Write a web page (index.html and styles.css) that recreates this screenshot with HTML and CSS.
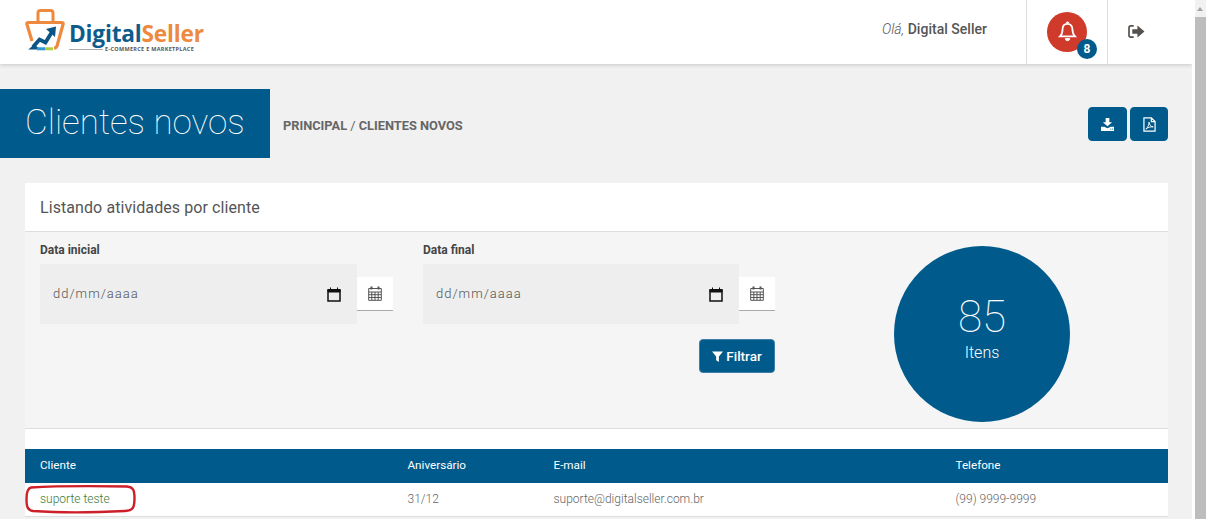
FILE: index.html
```html
<!DOCTYPE html>
<html lang="pt-BR">
<head>
<meta charset="utf-8">
<title>Clientes novos</title>
<link rel="stylesheet" href="styles.css">
</head>
<body>
<div class="app">
  <header class="topbar">
    <a class="logo">
      <svg class="logo-mark" viewBox="0 0 40 42" width="40" height="42" aria-hidden="true">
        <path d="M13 12V4Q13 1.500 15.500 1.500H25.500Q28 1.500 28 4V12" fill="none" stroke="#ee8a3e" stroke-width="3"/>
        <path d="M7 32 2 15.500Q1.300 13.500 3.500 13.500H36.500Q38.700 13.500 38 15.500L32 37Q31.300 39 29 39" fill="none" stroke="#ee8a3e" stroke-width="3.200" stroke-linejoin="round"/>
        <path d="M8 38 14.500 30.500 20.500 33.500 27.500 22" fill="none" stroke="#0b5585" stroke-width="3.800"/>
        <path d="M21 20 31 17.500 30 28Z" fill="#0b5585"/>
        <path d="M6 39.500 9 37 13 39.500 Z" fill="#0b5585" stroke="#0b5585" stroke-width="2"/>
        <path d="M12 39.800H20" stroke="#2f9ad6" stroke-width="3"/>
        <path d="M20 39.800H28" stroke="#b5cc3c" stroke-width="3"/>
      </svg>
      <span class="logo-text">
        <span class="logo-name"><span class="logo-blue">Digital</span><span class="logo-orange">Seller</span></span>
        <span class="logo-sub"><i class="logo-rule"></i>E-COMMERCE E MARKETPLACE</span>
      </span>
    </a>
    <div class="greeting"><em>Olá,</em> <strong>Digital Seller</strong></div>
    <div class="top-cell top-bell">
      <span class="bell">
        <svg viewBox="0 0 24 24" width="21" height="23" aria-hidden="true"><path d="M12 3.200c-3.500 0-5.600 2.600-5.600 6 0 5-1.200 6.600-3 8.300h17.200c-1.800-1.700-3-3.300-3-8.300 0-3.400-2.100-6-5.600-6Z" fill="none" stroke="#fff" stroke-width="2"/><path d="M10.500 2.500a1.500 1.500 0 0 1 3 0M9.500 20a2.500 2.500 0 0 0 5 0Z" fill="#fff" stroke="#fff"/></svg>
        <b class="badge">8</b>
      </span>
    </div>
    <div class="top-cell top-exit">
      <svg viewBox="0 0 20 16" width="19" height="15" aria-hidden="true"><path d="M7 2H4Q2 2 2 4V12Q2 14 4 14H7" fill="none" stroke="#55514e" stroke-width="1.800"/><path d="M5.500 5.500H11V1.500L18.500 8 11 14.500V10.500H5.500Z" fill="#55514e"/></svg>
    </div>
  </header>

  <section class="title-row">
    <h1 class="page-title">Clientes novos</h1>
    <nav class="crumbs"><b>PRINCIPAL</b> / <b>CLIENTES NOVOS</b></nav>
    <div class="actions">
      <button class="btn btn-icon btn-dl">
        <svg viewBox="0 0 16 14" width="15" height="13" aria-hidden="true"><path d="M6 0H10V4.500H13L8 9 3 4.500H6Z" fill="#fff"/><path d="M1 9.500H4.500L8 11 11.500 9.500H15V14H1Z" fill="#fff"/><path d="M11 12H12M13 12H14" stroke="#005a8c"/></svg>
      </button>
      <button class="btn btn-icon btn-pdf">
        <svg viewBox="0 0 14 16" width="13" height="15" aria-hidden="true"><path d="M1 .8H9L13 4.800V15.200H1Z M9 .8V4.800H13" fill="none" stroke="#fff" stroke-width="1.300"/><path d="M3 13C5.500 11 6.500 8 6.500 5.500 7 8.500 8.500 10.500 11 10.500 8 10.300 5.500 11 3 13Z" fill="none" stroke="#fff"/></svg>
      </button>
    </div>
  </section>

  <section class="panel">
    <h2 class="panel-head">Listando atividades por cliente</h2>
    <div class="filters">
      <form class="filter-form">
        <div class="field">
          <label class="field-label">Data inicial</label>
          <div class="date-row">
            <div class="date-input"><span>dd/mm/aaaa</span>
              <svg class="cal-native" viewBox="0 0 14 15" width="14" height="15" aria-hidden="true"><path d="M1 3H13V14H1Z" fill="none" stroke="#111" stroke-width="1.500"/><path d="M1 2.500H13V5H1ZM3.500 .5V3M10.500 .5V3" fill="#111" stroke="#111"/></svg>
            </div>
            <span class="date-addon">
              <svg viewBox="0 0 14 15" width="14" height="15" aria-hidden="true"><path d="M.7 2.500H13.300V14.300H.7ZM.7 6H13.300M.7 8.700H13.300M.7 11.500H13.300M3.800 6V14.300M7 6V14.300M10.200 6V14.300" fill="none" stroke="#555" stroke-width="1"/><path d="M3.500 .5V3.500M10.500 .5V3.500" stroke="#555" stroke-width="2"/></svg>
            </span>
          </div>
        </div>
        <div class="field field-end">
          <label class="field-label">Data final</label>
          <div class="date-row">
            <div class="date-input"><span>dd/mm/aaaa</span>
              <svg class="cal-native" viewBox="0 0 14 15" width="14" height="15" aria-hidden="true"><path d="M1 3H13V14H1Z" fill="none" stroke="#111" stroke-width="1.500"/><path d="M1 2.500H13V5H1ZM3.500 .5V3M10.500 .5V3" fill="#111" stroke="#111"/></svg>
            </div>
            <span class="date-addon">
              <svg viewBox="0 0 14 15" width="14" height="15" aria-hidden="true"><path d="M.7 2.500H13.300V14.300H.7ZM.7 6H13.300M.7 8.700H13.300M.7 11.500H13.300M3.800 6V14.300M7 6V14.300M10.200 6V14.300" fill="none" stroke="#555" stroke-width="1"/><path d="M3.500 .5V3.500M10.500 .5V3.500" stroke="#555" stroke-width="2"/></svg>
            </span>
          </div>
          <button class="btn btn-filter" type="button">
            <svg viewBox="0 0 12 12" width="11" height="11" aria-hidden="true"><path d="M0 .5H12L7.500 6V12L4.500 10V6Z" fill="#fff"/></svg>
            Filtrar
          </button>
        </div>
      </form>
      <div class="stat"><span class="stat-num">85</span><span class="stat-label">Itens</span></div>
    </div>
    <div class="spacer"></div>
    <div class="table">
      <div class="tr th"><span>Cliente</span><span>Aniversário</span><span>E-mail</span><span>Telefone</span></div>
      <div class="tr td"><span class="client">suporte teste</span><span>31/12</span><span>suporte@digitalseller.com.br</span><span>(99) 9999-9999</span></div>
    </div>
  </section>
  <svg class="scribble" viewBox="0 0 112 30" width="112" height="30" aria-hidden="true"><path d="M6 3.500C30 2 70 2 102 2.500 108 3 109.500 6 109.500 14 109.500 24 108 26.500 100 27 70 28.500 30 28.500 8 27 2.500 26 1.500 23 1.500 15 1.500 9 2 4.500 6 3.500Z" fill="none" stroke="#cc1f2a" stroke-width="2.400"/></svg>
</div>
<div class="scrollbar"><i class="scroll-arrow"></i><i class="scroll-thumb"></i></div>
</body>
</html>
```
FILE: styles.css
```css
* { box-sizing: border-box; }
html, body { margin: 0; height: 519px; overflow: hidden; }
body { background: #f1f1f1; font-family: Roboto, "Liberation Sans", sans-serif; color: #555; position: relative; }
.app { position: relative; width: 1193px; height: 519px; }

.topbar { display: flex; align-items: stretch; width: 1192px; height: 64px; background: #fff; box-shadow: 0 1px 4px rgba(0,0,0,.18); }
.logo { display: flex; align-items: flex-start; padding: 9px 0 0 25px; width: 860px; }
.logo-mark { flex: none; }
.logo-text { display: flex; flex-direction: column; margin: 15px 0 0 4px; }
.logo-name { font: 700 22.700px/20px "Open Sans", sans-serif; letter-spacing: -.2px; }
.logo-blue { color: #0d5c8c; }
.logo-orange { color: #ee8a3e; }
.logo-sub { display: flex; align-items: center; font: 700 5.500px/7px "Open Sans", sans-serif; color: #555; letter-spacing: .3px; white-space: nowrap; margin-top: 2px; }
.logo-rule { display: block; width: 34px; height: 1px; background: #aaa; margin-right: 2px; }
.greeting { flex: 1; text-align: right; padding: 21px 39px 0 0; font-size: 14px; line-height: 17px; color: #555; letter-spacing: .02px; }
.greeting em { font-weight: 300; }
.greeting strong { font-weight: 500; }
.top-cell { width: 81px; border-left: 1px solid #ddd; display: flex; align-items: center; justify-content: center; }
.top-bell { padding-bottom: 1px; }
.top-exit { width: 85px; padding: 0 28px 2px 0; }
.bell { position: relative; width: 40px; height: 40px; border-radius: 50%; background: #cf3a2b; display: flex; align-items: center; justify-content: center; }
.badge { position: absolute; right: -10px; bottom: -7px; width: 20px; height: 20px; border-radius: 50%; background: #005a8c; color: #fff; font: 700 12px/20px Roboto, sans-serif; text-align: center; }

.title-row { display: flex; align-items: center; margin-top: 25px; height: 69px; padding-right: 25px; }
.page-title { margin: 0; width: 270px; height: 69px; background: #005a8c; color: #fff; font-weight: 100; font-size: 35px; line-height: 67px; padding-left: 25px; }
.crumbs { margin-left: 13px; font-size: 12.800px; color: #666; flex: 1; padding-top: 4px; }
.crumbs b { font-weight: 700; }
.actions { display: flex; gap: 3px; margin-top: 1px; }
.btn { border: 1px solid #005a8c; background: #005a8c; color: #fff; border-radius: 4px; display: inline-flex; align-items: center; justify-content: center; padding: 0; font-family: inherit; }
.btn-icon { height: 34px; }
.btn-dl { width: 39px; }
.btn-pdf { width: 38px; }

.panel { margin: 25px 25px 0; background: #fff; }
.panel-head { margin: 0; height: 49px; border-bottom: 1px solid #ddd; padding: 1px 0 0 15px; font-weight: 400; font-size: 16px; line-height: 48px; color: #555; letter-spacing: .08px; }
.filters { display: flex; height: 197px; background: #f5f5f5; border-bottom: 1px solid #ddd; padding: 10px 0 0 15px; }
.filter-form { display: flex; gap: 30px; width: 735px; flex: none; }
.field { width: 353px; display: flex; flex-direction: column; }
.field-end { width: 352px; }
.field-label { font-size: 12px; font-weight: 700; line-height: 15px; color: #444; padding-top: 1px; height: 22px; }
.date-row { display: flex; align-items: center; }
.date-input { flex: 1; height: 60px; background: #eee; display: flex; align-items: center; justify-content: space-between; padding: 0 16px 0 13px; font-size: 13px; font-weight: 300; letter-spacing: 1px; color: #555; }
.date-input span { margin-top: -2px; }
.date-addon { flex: none; width: 36px; height: 34px; background: #fff; border-bottom: 1px solid #aaa; display: flex; align-items: center; justify-content: center; padding: 0 1px 1px 0; }
.btn-filter { align-self: flex-end; gap: 3px; width: 76px; height: 34px; margin-top: 15px; font-size: 13.500px; font-weight: 500; border-color: #3b7ea6; }
.stat { flex: none; width: 176px; height: 176px; margin: 4px 0 0 119px; border-radius: 50%; background: #005a8c; color: #fff; display: flex; flex-direction: column; align-items: center; padding-top: 44px; }
.stat-num { font-size: 44px; font-weight: 100; line-height: 54px; }
.stat-label { font-size: 16px; font-weight: 300; line-height: 18px; }
.spacer { height: 20px; }
.tr { display: grid; grid-template-columns: 367.500px 146px 402px 1fr; padding-left: 15px; font-size: 12px; }
.tr span { padding-bottom: 1px; }
.th { height: 34px; background: #005a8c; color: #fff; align-items: center; font-weight: 400; font-size: 11.700px; }
.th span { padding-bottom: 3px; }
.td { height: 34px; background: #fff; border-bottom: 1px solid #ddd; align-items: center; color: #666; font-weight: 300; }
.client { color: #3c7a3c; }
.scribble { position: absolute; left: 25px; top: 484px; }

.scrollbar { position: absolute; right: 0; top: 0; width: 14px; height: 519px; background: #f1f1f1; border-left: 3px solid #fff; }
.scroll-arrow { position: absolute; left: 2px; top: 7px; width: 0; height: 0; border: 3.500px solid transparent; border-top: 0; border-bottom: 4px solid #a3a3a3; }
.scroll-thumb { position: absolute; left: 0; right: 0; top: 17px; bottom: 0; background: #bdbdbd; }
```
